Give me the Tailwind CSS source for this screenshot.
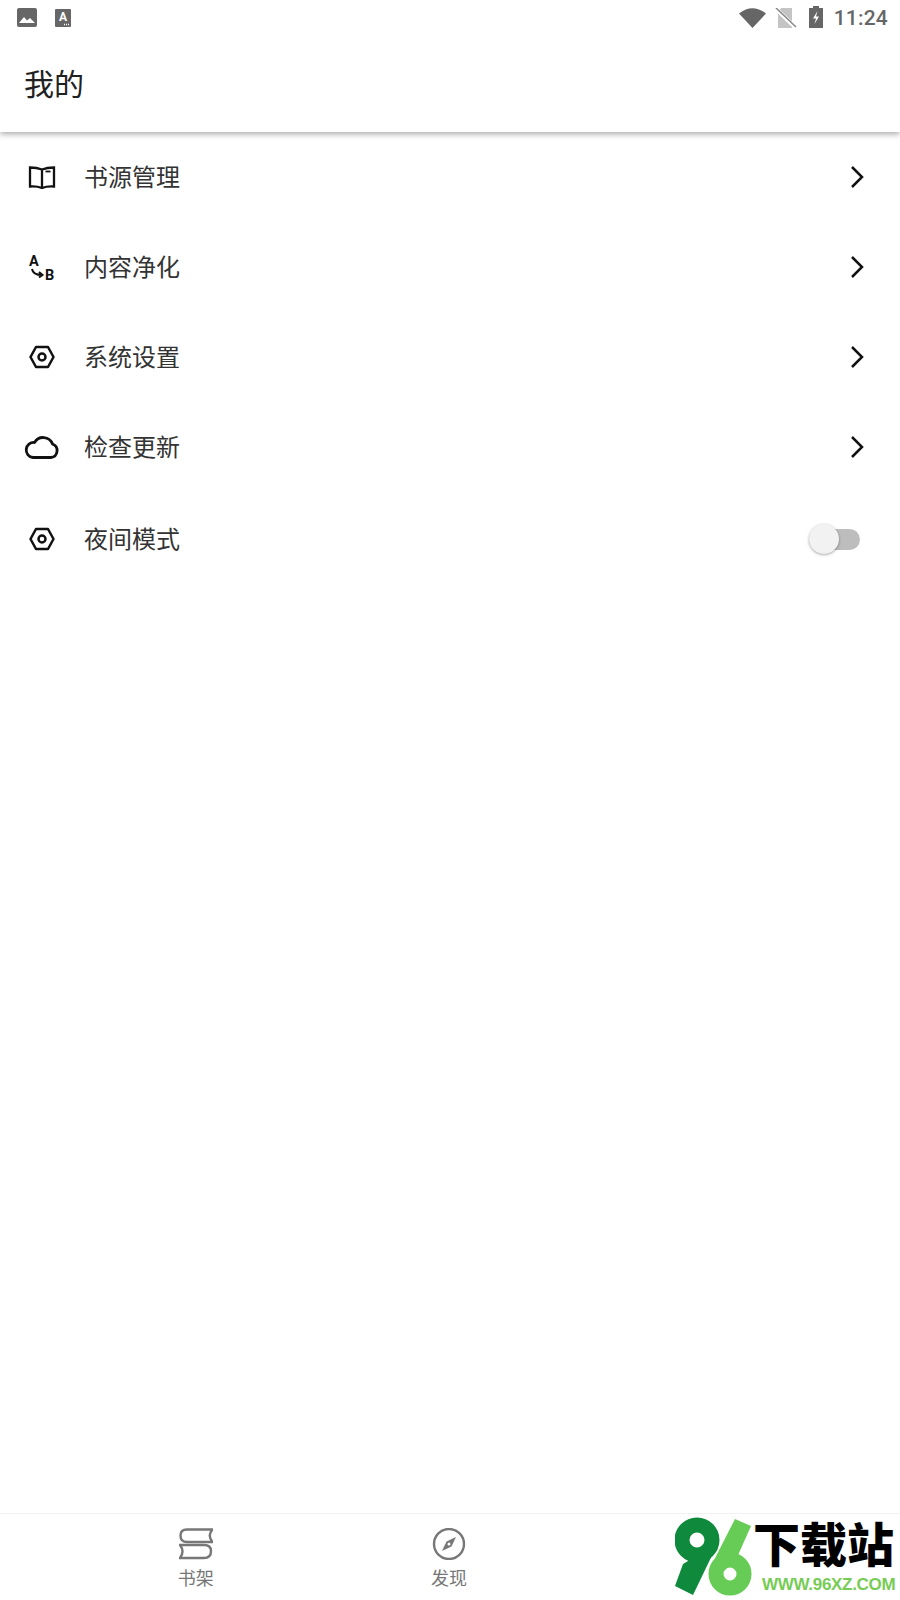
<!DOCTYPE html>
<html lang="zh-CN">
<head>
  <meta charset="UTF-8" />
  <meta name="viewport" content="width=device-width, initial-scale=1.0" />
  <title>我的</title>
  <script src="https://cdn.jsdelivr.net/npm/@tailwindcss/browser@4"></script>
</head>
<body class="bg-white font-['Noto_Sans_CJK_SC',sans-serif]">
  <div class="relative flex flex-col w-[900px] h-[1600px] overflow-hidden bg-white">

    <!-- header -->
    <header class="relative z-10 h-[132px] shrink-0 bg-white shadow-[0_2px_6px_rgba(0,0,0,0.35)]">
      <div class="flex items-center h-9 pl-[17px] pr-3 text-[#666]">
        <svg class="w-5 h-5" viewBox="0 0 20 20"><rect width="20" height="19" rx="2" fill="#666"/><path d="M2 15l5-6 3 3.500 3-2.500 5 5z" fill="#fff"/></svg>
        <svg class="w-4 h-[18px] ml-[18px]" viewBox="0 0 16 18"><rect width="16" height="18" rx="1" fill="#666"/><text x="8" y="12" text-anchor="middle" font-size="12" font-weight="700" fill="#fff" font-family="Roboto">A</text><path d="M9 15.500h5" stroke="#fff" stroke-width="1.500" stroke-dasharray="1 1"/></svg>
        <svg class="w-[27px] h-5 ml-auto mb-[1px]" viewBox="0 0 27 20"><path d="M0 5.500Q13.500-5 27 5.500L13.500 20z" fill="#666"/></svg>
        <svg class="w-[22px] h-5 ml-[9px]" viewBox="0 0 22 20"><path d="M6 0h11v20H3V4z" fill="#c4c4c4"/><path d="M1 1l20 19" stroke="#fff" stroke-width="4"/><path d="M1 0l20 19" stroke="#888" stroke-width="1.500"/></svg>
        <svg class="w-[14px] h-[22px] ml-3 mb-[2px]" viewBox="0 0 14 22"><path d="M4 0h6v2h4v20H0V2h4z" fill="#666"/><path d="M8.500 5L4 12.500h3L5.500 18 10 10.500H7z" fill="#fff"/></svg>
        <span class="ml-[11px] font-['Roboto',sans-serif] font-medium text-[21px] leading-none tracking-[0.2px]">11:24</span>
      </div>
      <h1 class="h-24 pl-6 flex items-center text-[30px] text-[#212121] leading-none pb-[5px]">我的</h1>
    </header>

    <!-- menu -->
    <main class="flex-1 text-[24px] text-[#333]">
      <div class="flex items-center h-[90px] pl-6 pr-9">
        <span class="w-[60px] flex"><svg class="w-[36px] h-6" viewBox="0 0 36 24" fill="none" stroke="#111" stroke-width="2.300"><path d="M18 4.500Q13 2.500 6 2.500V21.500Q13 21 18 23Q23 21 30 21.500V2.500Q23 2.500 18 4.500V23"/><path d="M21.500 6.500H26.500" stroke-width="1.800"/></svg></span>
        <span class="pb-[2px]">书源管理</span>
        <svg class="w-[14px] h-6 ml-auto" viewBox="0 0 14 24" fill="none" stroke="#111" stroke-width="2.500"><path d="M2 2l10 10-10 10"/></svg>
      </div>
      <div class="flex items-center h-[90px] pl-6 pr-9">
        <span class="w-[60px] flex"><svg class="w-[36px] h-[32px]" viewBox="0 0 36 32" fill="none"><text x="5" y="15" font-size="14.500" font-weight="700" fill="#111" font-family="Roboto">A</text><text x="21" y="29" font-size="14.500" font-weight="700" fill="#111" font-family="Roboto">B</text><path d="M8 18Q9 24 18 24M15 21l3.500 3-3.500 2.500" stroke="#111" stroke-width="2"/></svg></span>
        <span class="pb-[2px]">内容净化</span>
        <svg class="w-[14px] h-6 ml-auto" viewBox="0 0 14 24" fill="none" stroke="#111" stroke-width="2.500"><path d="M2 2l10 10-10 10"/></svg>
      </div>
      <div class="flex items-center h-[90px] pl-6 pr-9">
        <span class="w-[60px] flex"><svg class="w-[36px] h-6" viewBox="0 0 36 24" fill="none" stroke="#111" stroke-width="2.500"><path d="M12 2H24L29.500 12L24 22H12L6.500 12Z" stroke-linejoin="round"/><circle cx="18" cy="12" r="3.500"/></svg></span>
        <span class="pb-[2px]">系统设置</span>
        <svg class="w-[14px] h-6 ml-auto" viewBox="0 0 14 24" fill="none" stroke="#111" stroke-width="2.500"><path d="M2 2l10 10-10 10"/></svg>
      </div>
      <div class="flex items-center h-[90px] pl-6 pr-9">
        <span class="w-[60px] flex"><svg class="w-[36px] h-6" viewBox="0 0 36 24" fill="none" stroke="#111" stroke-width="2.800"><path d="M9 22.500H27A7 7 0 0 0 28.500 9A10 10 0 0 0 10.500 7.500A7.500 7.500 0 0 0 9 22.500Z" stroke-linejoin="round"/></svg></span>
        <span class="pb-[2px]">检查更新</span>
        <svg class="w-[14px] h-6 ml-auto" viewBox="0 0 14 24" fill="none" stroke="#111" stroke-width="2.500"><path d="M2 2l10 10-10 10"/></svg>
      </div>
      <div class="flex items-center h-[94px] pl-6 pr-10">
        <span class="w-[60px] flex"><svg class="w-[36px] h-6" viewBox="0 0 36 24" fill="none" stroke="#111" stroke-width="2.500"><path d="M12 2H24L29.500 12L24 22H12L6.500 12Z" stroke-linejoin="round"/><circle cx="18" cy="12" r="3.500"/></svg></span>
        <span class="pb-[2px]">夜间模式</span>
        <div class="relative ml-auto w-[51px] h-[21px] rounded-full bg-[#bdbdbd]">
          <div class="absolute left-0 top-[-5px] w-[30px] h-[30px] rounded-full bg-[#f2f2f2] shadow-[0_1px_3px_rgba(0,0,0,0.35)]"></div>
        </div>
      </div>
    </main>

    <!-- bottom nav -->
    <nav class="grid grid-cols-3 h-[87px] shrink-0 pl-[69px] pr-[71px] pt-[14px] border-t border-[#f2f2f2] text-[18px] text-[#777]">
      <div class="flex flex-col items-center gap-[5px]">
        <svg class="w-[34px] h-[32px]" viewBox="0 0 34 32" fill="none" stroke="#777" stroke-width="2.400"><path d="M33.500 1.500H8Q1.500 1.500 1.500 7.500Q1.500 14 8 14H33.500Q28 7.500 33.500 1.500Z"/><path d="M1 17H25Q32 17 32 23Q32 30 25 30H1Q6 23.500 1 17Z"/></svg>
        <span class="leading-[24px]">书架</span>
      </div>
      <div class="flex flex-col items-center gap-[5px]">
        <svg class="w-[34px] h-[32px]" viewBox="0 0 34 32" fill="none" stroke="#777" stroke-width="2.400"><circle cx="17" cy="16" r="15"/><path d="M24 9L19.500 18.500L10 23L14.500 13.500Z" fill="#777" stroke="none"/><circle cx="17" cy="16" r="1.500" fill="#fff" stroke="none"/></svg>
        <span class="leading-[24px]">发现</span>
      </div>
      <div></div>
    </nav>

    <!-- watermark -->
    <div class="absolute right-0 bottom-0 w-[225px] h-[86px] bg-white">
      <svg class="absolute left-0 top-0 w-[90px] h-[86px]" viewBox="0 0 90 86" fill="none">
        <circle cx="22" cy="26" r="15" stroke="#0f8a3c" stroke-width="15"/>
        <path d="M43 29L18 81L0 72L8 50Z" fill="#0f8a3c"/>
        <circle cx="55" cy="60" r="14" stroke="#66cc55" stroke-width="15"/>
        <path d="M34 56L60 5L76 12L60 48Z" fill="#66cc55"/>
      </svg>
      <div class="absolute left-[78px] top-[1px] text-[47px] leading-[54px] font-black text-black whitespace-nowrap">下载站</div>
      <div class="absolute left-[87px] top-[61px] font-['Liberation_Sans',sans-serif] text-[17px] leading-5 font-bold text-[#77cc55] whitespace-nowrap tracking-[-0.3px]">WWW.96XZ.COM</div>
    </div>
  </div>
</body>
</html>
